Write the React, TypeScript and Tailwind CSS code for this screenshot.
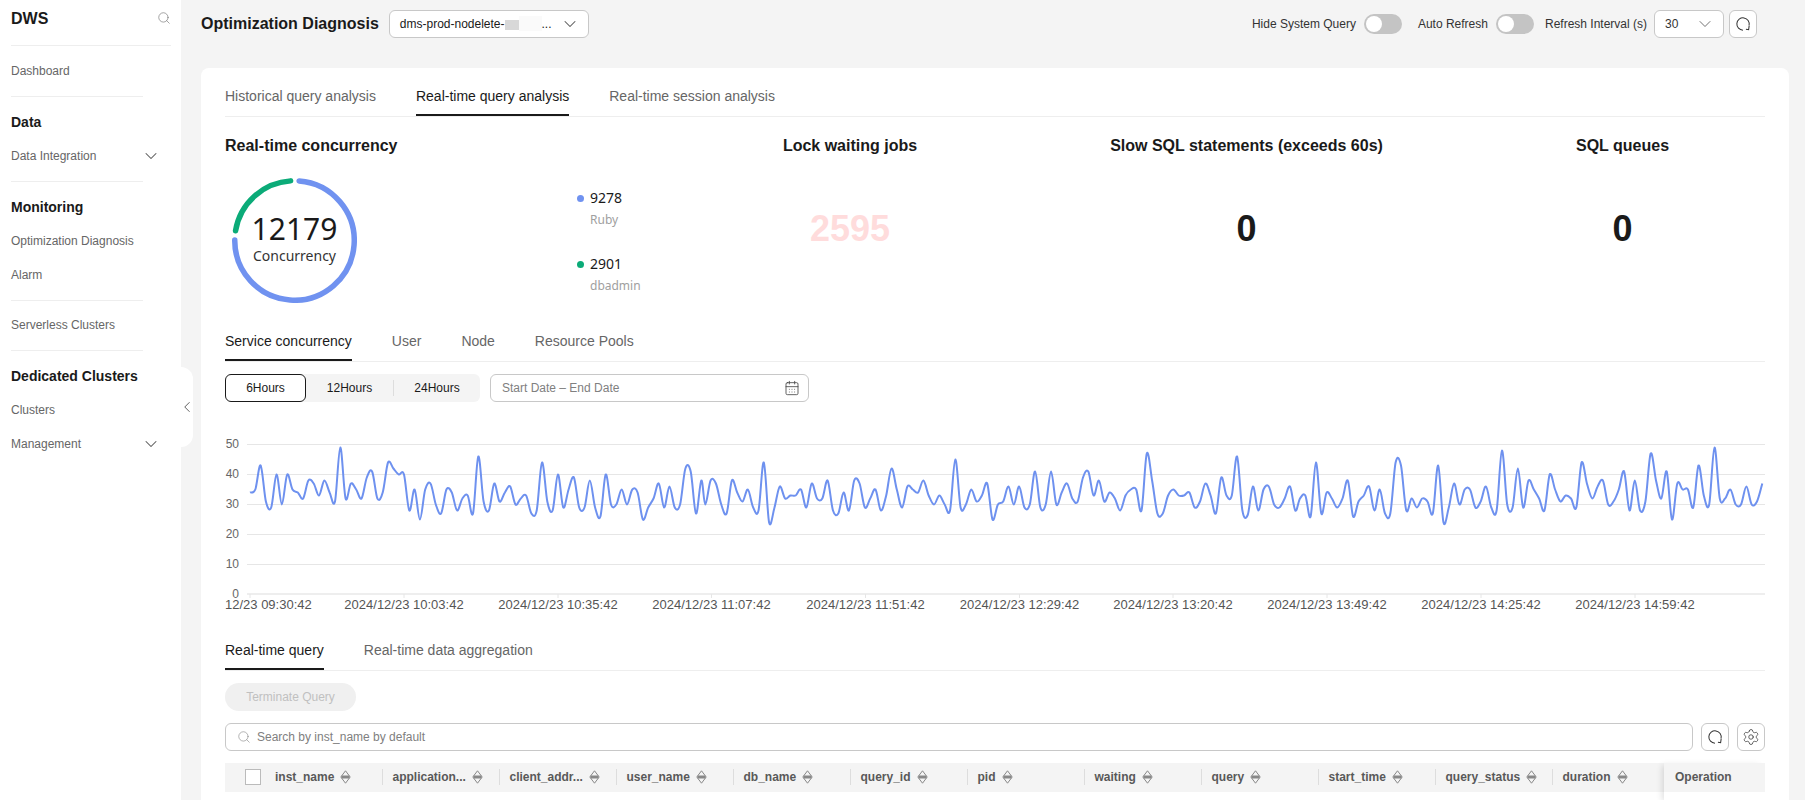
import { CalendarDays, ChevronDown, ChevronLeft, Search, Settings } from "lucide-react";

const segments: { x0: number; x1: number; values: number[] }[] = [
  {
    x0: 250,
    x1: 701.3,
    values: [
      34, 35, 43, 31, 29, 40, 30, 40, 35, 34, 32, 38, 37, 33, 38, 34, 31, 49, 32, 37, 35, 32, 39, 41, 32, 34, 44, 42, 40,
      40, 28, 35, 25, 35, 37, 30, 27, 35, 34, 28, 32, 33, 27, 46, 31, 28, 37, 31, 34, 36, 30, 32, 33, 27, 28, 44, 31, 28,
      40, 29, 35, 39, 29, 29, 38, 29, 26, 40, 30, 30, 35, 30, 35, 34, 25, 29, 32, 37, 29, 36, 29, 30, 42, 41, 27, 38,
    ],
  },
  {
    x0: 705.3,
    x1: 1200,
    values: [
      30, 38, 37, 30, 27, 38, 34, 31, 35, 29, 28, 44, 24, 29, 36, 32, 33, 33, 35, 29, 37, 32, 32, 38, 28, 27, 34, 28, 38,
      37, 29, 32, 35, 28, 33, 42, 35, 29, 36, 35, 34, 38, 33, 30, 33, 30, 28, 45, 29, 30, 35, 31, 33, 37, 25, 30, 31, 36,
      30, 36, 29, 30, 41, 29, 30, 41, 30, 34, 37, 32, 31, 39, 41, 33, 38, 31, 34, 32, 28, 33, 35, 35, 28, 47, 38, 27, 27,
      33, 35, 33, 33, 34, 29, 31,
    ],
  },
  {
    x0: 1205.3,
    x1: 1295.3,
    values: [37, 33, 27, 39, 33, 33, 46, 28, 26.5, 36, 28, 35, 36, 30, 29, 32, 36, 28],
  },
  {
    x0: 1300,
    x1: 1762.3,
    values: [
      32, 33, 26, 44, 27, 34, 32, 29, 32, 38, 26, 31, 33, 36, 28, 35, 27, 27, 44, 43, 28, 32, 29, 32, 31, 27, 43, 24, 29,
      37, 30, 35, 35, 29, 31, 36, 29, 28, 48, 30, 29, 42, 29, 38, 35, 32, 28, 40, 35, 31, 33, 32, 29, 44, 37, 32, 36, 38,
      30, 31, 35, 41, 28, 38, 28, 31, 47, 38, 32, 41, 25, 37, 35, 35, 29, 43, 33, 30, 49, 32, 32, 35, 30, 30, 36, 30, 31,
      37,
    ],
  },
];

const yOf = (v: number) => 14.5 + (50 - v) * 3;

function linePath() {
  const pts: [number, number][] = [];
  segments.forEach((s) => {
    s.values.forEach((v, i) => {
      pts.push([s.x0 - 225 + ((s.x1 - s.x0) * i) / (s.values.length - 1), yOf(v)]);
    });
  });
  let d = `M${pts[0][0]} ${pts[0][1]}`;
  for (let i = 0; i < pts.length - 1; i++) {
    const p0 = pts[Math.max(i - 1, 0)];
    const p1 = pts[i];
    const p2 = pts[i + 1];
    const p3 = pts[Math.min(i + 2, pts.length - 1)];
    const c1x = p1[0] + (p2[0] - p0[0]) / 6;
    const c1y = p1[1] + (p2[1] - p0[1]) / 6;
    const c2x = p2[0] - (p3[0] - p1[0]) / 6;
    const c2y = p2[1] - (p3[1] - p1[1]) / 6;
    d += `C${c1x.toFixed(1)} ${c1y.toFixed(1)} ${c2x.toFixed(1)} ${c2y.toFixed(1)} ${p2[0].toFixed(1)} ${p2[1].toFixed(1)}`;
  }
  return d;
}

const ticks = [
  { x: 250, t: "12/23 09:30:42" },
  { x: 404, t: "2024/12/23 10:03:42" },
  { x: 558, t: "2024/12/23 10:35:42" },
  { x: 711.5, t: "2024/12/23 11:07:42" },
  { x: 865.5, t: "2024/12/23 11:51:42" },
  { x: 1019.5, t: "2024/12/23 12:29:42" },
  { x: 1173, t: "2024/12/23 13:20:42" },
  { x: 1327, t: "2024/12/23 13:49:42" },
  { x: 1481, t: "2024/12/23 14:25:42" },
  { x: 1635, t: "2024/12/23 14:59:42" },
];

const columns = [
  "application...",
  "client_addr...",
  "user_name",
  "db_name",
  "query_id",
  "pid",
  "waiting",
  "query",
  "start_time",
  "query_status",
  "duration",
];

function NavSection({ children, tight }: { children: React.ReactNode; tight?: boolean }) {
  return <div className={`w-[132px] border-b border-[#eeeeee] pb-2 ${tight ? "pt-[7px]" : "pt-2"}`}>{children}</div>;
}

function NavItem({ label, arrow }: { label: string; arrow?: boolean }) {
  return (
    <div className="flex h-[34px] w-[150px] items-center justify-between text-xs whitespace-nowrap text-[#666666]">
      {label}
      {arrow && <ChevronDown size={20} strokeWidth={1.25} className="text-[#555555]" />}
    </div>
  );
}

function NavTitle({ label }: { label: string }) {
  return <div className="flex h-[34px] items-center text-sm font-bold whitespace-nowrap text-[#1a1a1a]">{label}</div>;
}

function Tabs({ items, active }: { items: string[]; active: string }) {
  return (
    <div className="flex h-[41px] gap-10 border-b border-[#eeeeee] text-sm">
      {items.map((t) => (
        <div
          key={t}
          className={
            t === active
              ? "flex h-10 items-center border-y-2 border-t-transparent border-b-[#1a1a1a] text-[#1a1a1a]"
              : "flex h-10 items-center text-[#666666]"
          }
        >
          {t}
        </div>
      ))}
    </div>
  );
}

function Toggle() {
  return (
    <div className="flex h-5 w-[38px] items-center rounded-full bg-[#c4c4c4] pl-[2px]">
      <div className="h-4 w-4 rounded-full bg-white" />
    </div>
  );
}

function RefreshIcon() {
  return (
    <svg width="18" height="18" viewBox="0 0 16 16" fill="none" stroke="#333333" strokeWidth="0.9">
      <path d="M8 13.5A5.5 5.5 0 1 1 13.4 9.2" />
      <path d="M13.5 9.4L13 13L10.6 12.6" />
    </svg>
  );
}

function IconButton({ children }: { children: React.ReactNode }) {
  return (
    <div className="flex h-7 w-7 shrink-0 items-center justify-center rounded-md border border-[#c8c8c8] bg-white">
      {children}
    </div>
  );
}

function SortIcon() {
  return (
    <svg width="11" height="14" viewBox="0 0 11 14" fill="none" className="ml-[6px] shrink-0">
      <path d="M5.5 0.8L10.2 7L5.5 13.2L0.8 7Z" stroke="#888888" strokeWidth="1" />
      <rect x="1.5" y="5.5" width="8" height="3" fill="#888888" />
    </svg>
  );
}

function Stat({ title, value, width, red }: { title: string; value: string; width: string; red?: boolean }) {
  return (
    <div className={`flex shrink-0 flex-col items-center ${width}`}>
      <div className="text-base leading-[18px] font-bold whitespace-nowrap text-[#1a1a1a]">{title}</div>
      <div className={`mt-[54px] text-4xl leading-[40px] font-bold ${red ? "text-[#ffdcdc]" : "text-[#1a1a1a]"}`}>
        {value}
      </div>
    </div>
  );
}

export default function App() {
  return (
    <div className="flex h-[800px] w-[1805px] overflow-hidden bg-[#f4f4f4] [font-family:'Liberation_Sans',Arial,sans-serif]">
      {/* sidebar */}
      <div className="relative w-[181px] shrink-0 bg-white pl-[11px]">
        <div className="flex h-[46px] w-[160px] items-start justify-between border-b border-[#eeeeee] pt-[10px]">
          <span className="text-base leading-[18px] font-bold text-[#1a1a1a]">DWS</span>
          <Search size={14} strokeWidth={1} className="mt-[1px] text-[#666666]" />
        </div>
        <NavSection>
          <NavItem label="Dashboard" />
        </NavSection>
        <NavSection>
          <NavTitle label="Data" />
          <NavItem label="Data Integration" arrow />
        </NavSection>
        <NavSection>
          <NavTitle label="Monitoring" />
          <NavItem label="Optimization Diagnosis" />
          <NavItem label="Alarm" />
        </NavSection>
        <NavSection tight>
          <NavItem label="Serverless Clusters" />
        </NavSection>
        <div className="py-2">
          <NavTitle label="Dedicated Clusters" />
          <NavItem label="Clusters" />
          <NavItem label="Management" arrow />
        </div>
        <div className="absolute top-[367px] -right-3 flex h-20 w-3 items-center justify-center rounded-r-xl bg-white">
          <ChevronLeft size={18} strokeWidth={1.25} className="shrink-0 text-[#555555]" />
        </div>
      </div>

      {/* main */}
      <div className="flex min-w-0 flex-1 flex-col">
        <div className="flex h-[68px] shrink-0 items-start justify-between pt-[10px] pr-12 pl-5">
          <div className="flex h-7 items-center gap-[10px]">
            <span className="text-base font-bold whitespace-nowrap text-[#1a1a1a]">Optimization Diagnosis</span>
            <div className="flex h-7 w-[200px] items-center rounded-md border border-[#c8c8c8] bg-white pr-2 pl-[10px] text-xs text-[#1a1a1a]">
              <span className="whitespace-nowrap">dms-prod-nodelete-</span>
              <span className="h-[10px] w-[14px] translate-y-[1px] bg-[#d8d8d8]" />
              <span className="h-[15px] w-[23px] -translate-y-[1px] bg-[#fafafa]" />
              <span>...</span>
              <ChevronDown size={20} strokeWidth={1.25} className="ml-auto text-[#555555]" />
            </div>
          </div>
          <div className="flex h-7 items-center text-xs whitespace-nowrap text-[#333333]">
            <span>Hide System Query</span>
            <div className="mr-4 ml-2">
              <Toggle />
            </div>
            <span>Auto Refresh</span>
            <div className="mr-[11px] ml-2">
              <Toggle />
            </div>
            <span>Refresh Interval (s)</span>
            <div className="mr-[5px] ml-[7px] flex h-7 w-[70px] items-center justify-between rounded-md border border-[#c8c8c8] bg-white pr-2 pl-[10px]">
              30
              <ChevronDown size={20} strokeWidth={1} className="text-[#555555]" />
            </div>
            <IconButton>
              <RefreshIcon />
            </IconButton>
          </div>
        </div>

        <div className="mr-4 ml-5 flex-1 rounded-t-lg bg-white pt-2 pr-6 pl-6">
          <Tabs
            items={["Historical query analysis", "Real-time query analysis", "Real-time session analysis"]}
            active="Real-time query analysis"
          />

          {/* stats */}
          <div className="mt-5 flex h-[166px]">
            <div className="flex w-[495px] shrink-0 flex-col">
              <div className="text-base leading-[18px] font-bold text-[#1a1a1a]">Real-time concurrency</div>
              <div className="mt-[23px] ml-[7px] flex">
                <div className="relative h-[125px] w-[125px]">
                  <svg width="125" height="125" viewBox="0 0 125 125" fill="none" className="absolute inset-0">
                    <circle
                      cx="62.5"
                      cy="62.5"
                      r="59.75"
                      stroke="#7092f0"
                      strokeWidth="5.5"
                      strokeLinecap="round"
                      strokeDasharray="277 377"
                      transform="rotate(-85.6 62.5 62.5)"
                    />
                    <circle
                      cx="62.5"
                      cy="62.5"
                      r="59.75"
                      stroke="#0bab78"
                      strokeWidth="5.5"
                      strokeLinecap="round"
                      strokeDasharray="80 377"
                      transform="rotate(-170.6 62.5 62.5)"
                    />
                  </svg>
                  <div className="flex h-full flex-col items-center justify-center pb-[5px] [font-family:'Noto_Sans',sans-serif] text-[#1a1a1a]">
                    <div className="text-[30px] leading-[35px]">12179</div>
                    <div className="text-sm leading-5 text-[#333333]">Concurrency</div>
                  </div>
                </div>
                <div className="mt-[10px] ml-[220px] flex flex-col [font-family:'Noto_Sans',sans-serif]">
                  <div className="flex h-5 items-center gap-[6px] text-sm whitespace-nowrap text-[#1a1a1a]">
                    <span className="h-[7px] w-[7px] rounded-full bg-[#7092f0]" />
                    9278
                  </div>
                  <div className="mt-[2px] pl-[13px] text-xs leading-5 text-[#a0a0a0]">Ruby</div>
                  <div className="mt-6 flex h-5 items-center gap-[6px] text-sm text-[#1a1a1a]">
                    <span className="h-[7px] w-[7px] rounded-full bg-[#0bab78]" />
                    2901
                  </div>
                  <div className="mt-[2px] pl-[13px] text-xs leading-5 text-[#a0a0a0]">dbadmin</div>
                </div>
              </div>
            </div>
            <Stat title="Lock waiting jobs" value="2595" width="w-[260px]" red />
            <Stat title="Slow SQL statements (exceeds 60s)" value="0" width="w-[533px]" />
            <Stat title="SQL queues" value="0" width="w-[219px]" />
          </div>

          <div className="mt-[18px]">
            <Tabs items={["Service concurrency", "User", "Node", "Resource Pools"]} active="Service concurrency" />
          </div>

          <div className="mt-3 flex h-7 gap-[10px]">
            <div className="flex h-7 w-[255px] items-center rounded-md bg-[#f4f4f4] text-xs text-[#1a1a1a]">
              <div className="flex h-7 w-[81px] items-center justify-center rounded-md border border-[#1a1a1a] bg-white">
                6Hours
              </div>
              <div className="flex w-[87px] items-center justify-center">12Hours</div>
              <div className="h-4 w-px bg-[#dddddd]" />
              <div className="flex w-[86px] items-center justify-center">24Hours</div>
            </div>
            <div className="flex h-7 w-[319px] items-center justify-between rounded-md border border-[#c8c8c8] bg-white pr-2 pl-[11px] text-xs text-[#808080]">
              Start Date – End Date
              <CalendarDays size={16} strokeWidth={1.25} className="text-[#444444]" />
            </div>
          </div>

          {/* chart */}
          <svg width="1540" height="185" viewBox="0 0 1540 185" fill="none" className="mt-7 block">
            {[50, 40, 30, 20, 10].map((v) => (
              <line key={v} x1="22" x2="1540" y1={yOf(v)} y2={yOf(v)} stroke="#e6e6e6" />
            ))}
            <line x1="22" x2="1540" y1="164" y2="164" stroke="#eeeeee" strokeWidth="2" />
            {[50, 40, 30, 20, 10, 0].map((v) => (
              <text
                key={v}
                x="14"
                y={yOf(v) + 3}
                textAnchor="end"
                fontSize="12"
                fill="#666666"
                fontFamily="Liberation Sans, Arial, sans-serif"
              >
                {v}
              </text>
            ))}
            {ticks.map((t, i) => (
              <g key={t.t}>
                <line x1={t.x - 225} x2={t.x - 225} y1="164" y2="168" stroke="#e6e6e6" />
                <text
                  x={i === 0 ? 0 : t.x - 225}
                  y="179"
                  textAnchor={i === 0 ? "start" : "middle"}
                  fontSize="13"
                  fill="#555555"
                  fontFamily="Liberation Sans, Arial, sans-serif"
                >
                  {t.t}
                </text>
              </g>
            ))}
            <path d={linePath()} stroke="#6e91ef" strokeWidth="2" strokeLinejoin="round" />
          </svg>

          <div className="mt-[15px]">
            <Tabs items={["Real-time query", "Real-time data aggregation"]} active="Real-time query" />
          </div>

          <div className="mt-3 flex h-7 w-[131px] items-center justify-center rounded-full bg-[#f0f0f0] text-xs text-[#c0c0c0]">
            Terminate Query
          </div>

          <div className="mt-3 flex h-7 gap-2">
            <div className="flex h-7 flex-1 items-center gap-[6px] rounded-md border border-[#c8c8c8] bg-white pl-[11px] text-xs text-[#808080]">
              <Search size={14} strokeWidth={1} className="text-[#808080]" />
              Search by inst_name by default
            </div>
            <IconButton>
              <RefreshIcon />
            </IconButton>
            <IconButton>
              <Settings size={18} strokeWidth={1} className="text-[#333333]" />
            </IconButton>
          </div>

          {/* table */}
          <div className="mt-3 flex h-10 text-xs font-bold text-[#595959]">
            <div className="flex h-[29px] min-w-0 flex-1 items-center overflow-hidden bg-[#f4f4f4] pb-[2px]">
              <div className="flex w-[156.5px] shrink-0 items-center pl-5">
                <div className="mr-[14px] h-4 w-4 shrink-0 border border-[#bbbbbb] bg-white" />
                inst_name
                <SortIcon />
              </div>
              {columns.map((c) => (
                <div key={c} className="flex h-4 w-[117px] shrink-0 items-center border-l border-[#dddddd] pl-[10px]">
                  {c}
                  <SortIcon />
                </div>
              ))}
            </div>
            <div className="relative w-[101px] shrink-0 bg-white shadow-[-4px_0_6px_-2px_rgba(0,0,0,0.12)]">
              <div className="flex h-[29px] items-center bg-[#f4f4f4] pb-[2px] pl-[11px]">Operation</div>
            </div>
          </div>
        </div>
      </div>
    </div>
  );
}
